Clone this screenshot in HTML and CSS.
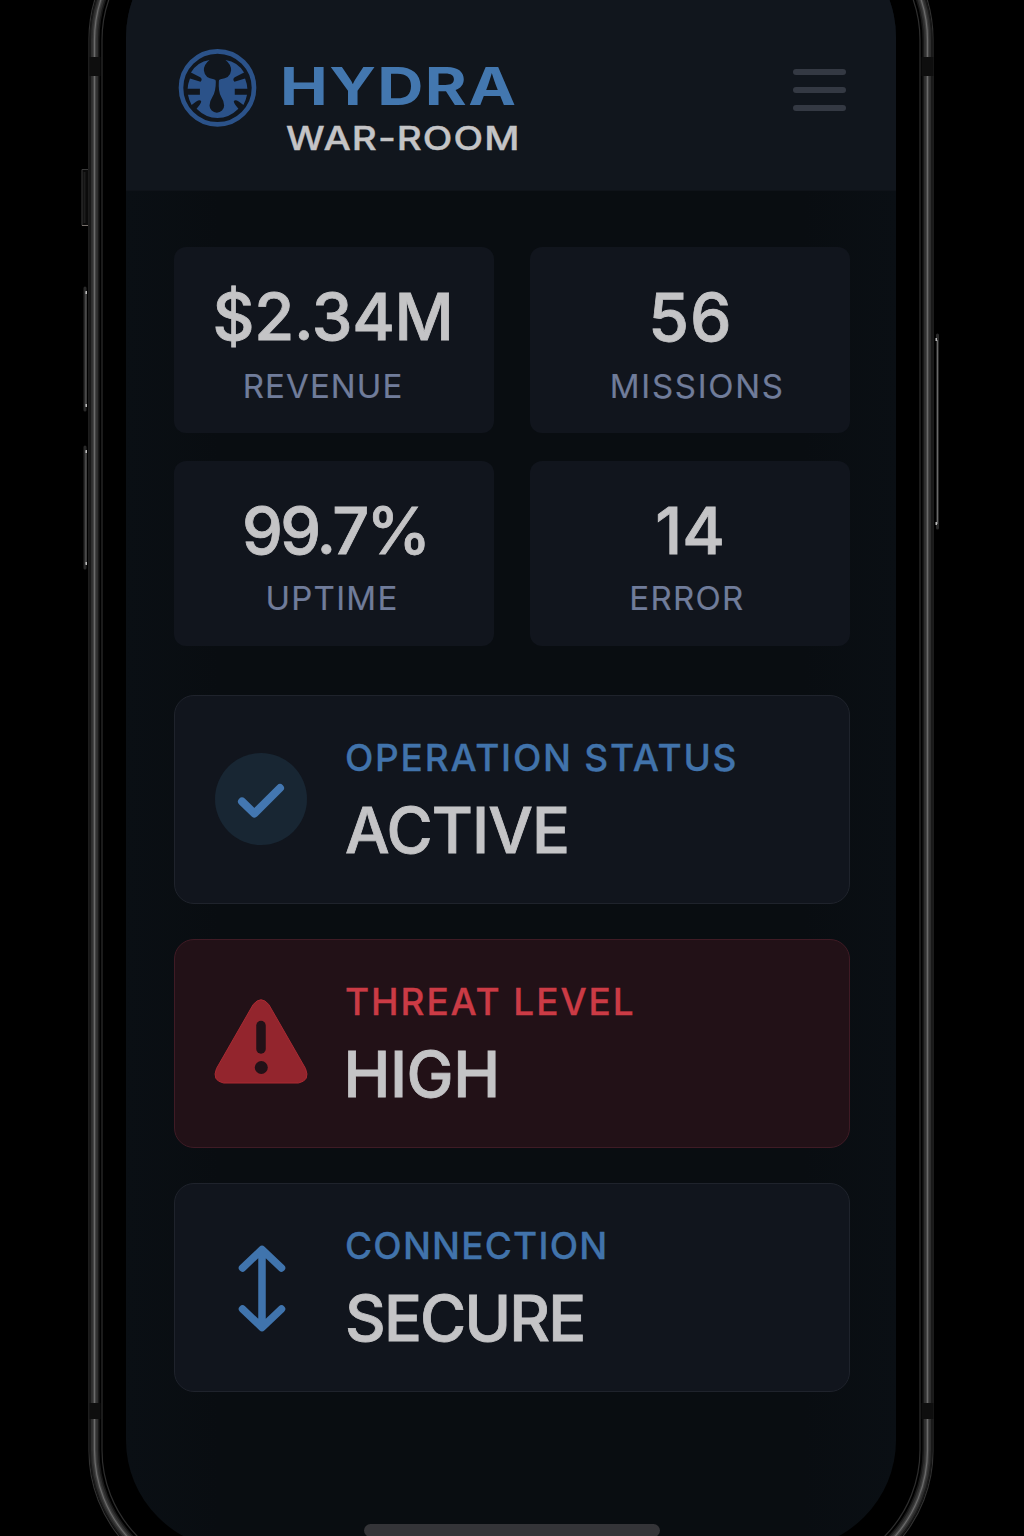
FILE: index.html
```
<!DOCTYPE html>
<html lang="en">
<head>
<meta charset="utf-8">
<title>Hydra War-Room</title>
<link rel="stylesheet" href="styles.css">
</head>
<body>
<svg class="phone-frame" viewBox="0 0 1024 1536" fill="none" aria-hidden="true">
  <defs>
    <path id="rail" d="M225 -91 A131 131 0 0 0 94.500 40 V1450 A131 131 0 0 0 225 1581 H797 A131 131 0 0 0 927.500 1450 V40 A131 131 0 0 0 797 -91 Z"/>
  </defs>
  <path d="M225 -97 A136 136 0 0 0 89 40 V1450 A136 136 0 0 0 225 1587 H797 A136 136 0 0 0 933 1450 V40 A136 136 0 0 0 797 -97 Z" stroke="#303030" stroke-width="1.200"/>
  <use href="#rail" stroke="#191919" stroke-width="10"/>
  <use href="#rail" stroke="#2e2e2e" stroke-width="7"/>
  <use href="#rail" stroke="#424242" stroke-width="3.500"/>
  <use href="#rail" stroke="#6a6a6a" stroke-width="1.200"/>
  <path d="M225 -83 A123 123 0 0 0 102 40 V1450 A123 123 0 0 0 225 1573 H797 A123 123 0 0 0 920 1450 V40 A123 123 0 0 0 797 -83 Z" stroke="#2e2e2e" stroke-width="1.200"/>
  <path d="M89.500 57h11v19h-11zM921.500 57h12v19h-12zM89.500 1403h11v16h-11zM921.500 1403h12v16h-12z" fill="#0e0e0e"/>
  <path d="M88 169.500H82V225.500H88" fill="#0b0b0b" stroke="#3a3a3a"/>
  <path d="M84.500 172V223" stroke="#1d1d1d" stroke-width="2"/>
  <path d="M82 225.500H88" stroke="#77706c"/>
  <path d="M85 288V410M85 447V568M937.500 335V528" stroke="#292929" stroke-width="3" stroke-linecap="round"/>
  <path d="M86 292V406M86 451V564M937.500 340V524" stroke="#686868" stroke-width="1"/>
  <path d="M85.500 291h1.500v3h-1.500zM85.500 404h1.500v3h-1.500zM85.500 450h1.500v3h-1.500zM85.500 562h1.500v3h-1.500zM935.500 338h1.500v3h-1.500zM935.500 522h1.500v3h-1.500z" fill="#bbb"/>
</svg>

<div class="screen">
  <header class="header">
    <svg class="logo" viewBox="39 38 238 238" aria-hidden="true">
      <circle cx="158" cy="158" r="110" fill="none" stroke="#2b5289" stroke-width="14"/>
      <path fill="#2b5289" d="M134 74 Q96 80 78 112 L106 126 Q114 132 107 140 L75 130 Q69 145 68 161 H105 V179 H69 Q72 195 80 210 L94 199 Q106 192 109 199 Q109 204 95 221 Q123 249 158 249 Q193 249 221 221 Q207 204 207 199 Q210 192 222 199 L236 210 Q244 195 247 179 H210 V161 H248 Q247 145 241 130 L209 140 Q202 132 210 126 L238 112 Q220 80 182 74 Q200 88 199 106 Q196 130 167 132 Q161 133 162 140 Q160 170 169 185 Q178 199 178 211 A21 21 0 0 1 134 211 Q134 199 143 185 Q153 170 153 140 Q154 133 147 132 Q120 130 117 106 Q116 88 134 74 Z"/>
    </svg>
    <div class="brand">
      <div class="brand-name">HYDRA</div>
      <div class="brand-sub">WAR-ROOM</div>
    </div>
    <div class="menu"><span></span><span></span><span></span></div>
  </header>

  <main class="content">
    <section class="stats">
      <div class="stat stat--revenue"><div class="stat-value">$2.34M</div><div class="stat-label">REVENUE</div></div>
      <div class="stat stat--missions"><div class="stat-value">56</div><div class="stat-label">MISSIONS</div></div>
      <div class="stat stat--uptime"><div class="stat-value">99.7%</div><div class="stat-label">UPTIME</div></div>
      <div class="stat stat--error"><div class="stat-value">14</div><div class="stat-label">ERROR</div></div>
    </section>

    <section class="statuses">
      <article class="status status--operation">
        <svg class="status-icon" viewBox="0 0 94 94" aria-hidden="true">
          <circle cx="47" cy="47" r="46" fill="#182633"/>
          <path d="M28 49.500 L40.500 61.500 L66 36" fill="none" stroke="#4377b1" stroke-width="8" stroke-linecap="round" stroke-linejoin="round"/>
        </svg>
        <div><div class="status-label">OPERATION STATUS</div><div class="status-value">ACTIVE</div></div>
      </article>
      <article class="status status--threat">
        <svg class="status-icon" viewBox="0 0 94 94" aria-hidden="true">
          <path d="M39.200 8.500 Q47 -1 54.800 8.500 L91.500 72.500 Q96.500 84.500 84.500 87 H9.500 Q-2.500 84.500 2.500 72.500 Z" fill="#93252d" stroke="#a92a32" stroke-width="1"/>
          <path d="M47 29.500 V53" stroke="#221117" stroke-width="9.500" stroke-linecap="round"/>
          <circle cx="47.300" cy="71.500" r="6.500" fill="#221117"/>
        </svg>
        <div><div class="status-label">THREAT LEVEL</div><div class="status-value">HIGH</div></div>
      </article>
      <article class="status status--connection">
        <svg class="status-icon" viewBox="0 0 94 94" aria-hidden="true">
          <path d="M48 10 V87 M28.500 28 L48 9.500 L67.500 28 M28.500 69 L48 87.500 L67.500 69" fill="none" stroke="#4074ad" stroke-width="7.500" stroke-linecap="round" stroke-linejoin="round"/>
        </svg>
        <div><div class="status-label">CONNECTION</div><div class="status-value">SECURE</div></div>
      </article>
    </section>
  </main>
  <div class="home-indicator"></div>
</div>
</body>
</html>
```
FILE: styles.css
```
* { box-sizing: border-box; }

body {
  margin: 0;
  height: 1536px;
  overflow: hidden;
  background: #000;
  color: #c4c4c6;
  font-family: Inter, "Liberation Sans", sans-serif;
}

.phone-frame {
  position: absolute;
  top: 0;
  left: 0;
  width: 1024px;
  height: 1536px;
}

/* The phone is taller than the window, so its screen runs past both edges. */
.screen {
  display: flex;
  flex-direction: column;
  width: 770px;
  height: 1621px;
  margin: -72px 0 0 126px;
  border-radius: 109px;
  overflow: hidden;
  background: linear-gradient(90deg, #0a0f14, #090d11 12%, #090d11 88%, #0a0f14);
}

.header {
  display: flex;
  flex: none;
  align-items: flex-start;
  height: 263px;
  padding: 120px 50px 0 52px;
  border-bottom: 1px solid #0f1319;
  background: #11161d;
}

.logo { width: 79px; height: 79px; }

.brand { margin: 13px auto 0 23px; white-space: nowrap; }

.brand-name {
  color: #4377af;
  font-size: 52px;
  font-weight: 700;
  line-height: 52px;
  letter-spacing: 1.1px;
  transform: scaleX(1.23);
  transform-origin: left;
}

.brand-sub {
  margin: 9px 0 0 6px;
  font-size: 33px;
  font-weight: 500;
  line-height: 33px;
  letter-spacing: 0.9px;
  -webkit-text-stroke: 0.4px currentColor;
  transform: scaleX(1.17);
  transform-origin: left;
}

.menu { display: grid; gap: 12px; margin-top: 21px; }
.menu span { width: 53px; height: 6px; border-radius: 3px; background: #343943; }

.content { padding: 56px 46px 0 48px; }

.stats {
  display: grid;
  grid-template: 186px 185px / 320px 320px;
  gap: 28px 36px;
}

.stat {
  display: flex;
  flex-direction: column;
  align-items: center;
  gap: 20px;
  padding-top: 37px;
  border-radius: 12px;
  background: #11151d;
}

.stat-value,
.status-value {
  font-weight: 500;
  -webkit-text-stroke: 0.8px currentColor;
}

.stat-value { font-size: 65px; line-height: 66px; }

.stat-label {
  color: #707c9a;
  font-size: 33px;
  line-height: 32px;
  -webkit-text-stroke: 0.2px currentColor;
}

.stat--revenue .stat-value { letter-spacing: -0.3px; transform: translateX(-1px); }
.stat--revenue .stat-label { letter-spacing: 1.1px; transform: translateX(-10.9px); }
.stat--missions .stat-value { font-size: 66px; letter-spacing: 1px; transform: translateX(0.5px); }
.stat--missions .stat-label { letter-spacing: 1.7px; transform: translateX(7.2px); }
.stat--uptime .stat-value { letter-spacing: -2.8px; transform: translateX(1.2px); }
.stat--uptime .stat-label { letter-spacing: 1.3px; transform: translateX(-2px); }
.stat--error .stat-label { letter-spacing: 1.3px; transform: translateX(-3px); }
.stat--uptime, .stat--error { gap: 18px; }

.statuses { display: grid; gap: 35px; margin-top: 49px; }

.status {
  display: flex;
  align-items: center;
  gap: 37px;
  width: 675.5px;
  height: 209px;
  padding: 0 38px 0 39px;
  border: 1px solid #1f232c;
  border-radius: 20px;
  background: #11151d;
}

.status-icon { width: 94px; height: 94px; margin-top: -2px; }

.status-label {
  margin-top: 3px;
  color: #4173ab;
  font-size: 37px;
  font-weight: 500;
  line-height: 36px;
  letter-spacing: 1.75px;
  -webkit-text-stroke: 0.3px currentColor;
}

.status-value {
  margin-top: 22px;
  font-size: 63px;
  line-height: 64px;
}

.status--operation .status-value { letter-spacing: -0.9px; }
.status--threat { border-color: #3f1b25; background: #221117; }
.status--threat .status-label { color: #cb3b45; letter-spacing: 1.9px; }
.status--threat .status-value { margin-left: -1.5px; letter-spacing: -0.5px; }
.status--connection .status-label { letter-spacing: 1.2px; }
.status--connection .status-value { letter-spacing: -1.8px; }

.home-indicator {
  flex: none;
  width: 296px;
  height: 13px;
  margin: auto 0 12px 238px;
  border-radius: 7px;
  background: #343438;
}
```
